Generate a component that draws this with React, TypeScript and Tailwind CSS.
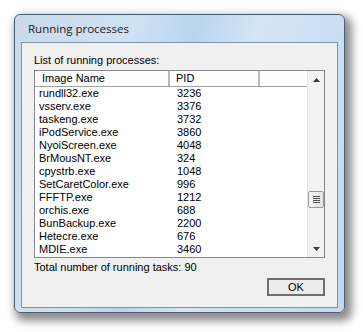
import React from "react";

const rows: [string, string][] = [
  ["rundll32.exe", "3236"],
  ["vsserv.exe", "3376"],
  ["taskeng.exe", "3732"],
  ["iPodService.exe", "3860"],
  ["NyoiScreen.exe", "4048"],
  ["BrMousNT.exe", "324"],
  ["cpystrb.exe", "1048"],
  ["SetCaretColor.exe", "996"],
  ["FFFTP.exe", "1212"],
  ["orchis.exe", "688"],
  ["BunBackup.exe", "2200"],
  ["Hetecre.exe", "676"],
  ["MDIE.exe", "3460"],
];

function ScrollArrow({ up }: { up?: boolean }) {
  return (
    <div className="h-[17px] flex items-center justify-center">
      <svg width="7" height="4" viewBox="0 0 7 4">
        {up ? <polygon points="3.5,0 7,4 0,4" fill="#3c3c3c" /> : <polygon points="0,0 7,0 3.5,4" fill="#3c3c3c" />}
      </svg>
    </div>
  );
}

export default function App() {
  return (
    <div className="w-[363px] h-[332px] bg-white pt-[14px] pl-[14px] font-['Liberation_Sans',Arial,sans-serif] text-[11px] text-black">
      <div className="w-[331px] h-[299px] rounded-[6px] border border-[#4e5c6c] shadow-[4px_5px_9px_3px_rgba(0,0,0,0.45)] bg-[linear-gradient(105deg,#c9daea_0%,#cfe2f4_30%,#b9d4ee_45%,#d3e5f6_60%,#c0d9f1_100%)] flex flex-col px-[6px] pb-[4px]">
        <div className="h-[27px] flex items-center pl-[7px] pt-[1px] text-[11.5px] text-[#1a1a1a] font-['Open_Sans',sans-serif]">
          Running processes
        </div>
        <div className="flex-1 border border-[#8193a8] bg-[#f0f0f0] flex flex-col px-[12px] pt-[11px]">
          <div className="h-[13px] leading-[13px]">List of running processes:</div>
          <div className="mt-[3px] h-[188px] border border-[#828790] bg-white flex">
            <div className="flex-1 flex flex-col">
              <div className="h-[16px] flex border-b border-[#a0a0a0] bg-[#fdfdfd] leading-[15px]">
                <div className="w-[135px] pl-[7px] border-r-2 border-r-[#b8b8b8]">Image Name</div>
                <div className="w-[90px] pl-[6px] border-r-2 border-r-[#b8b8b8]">PID</div>
                <div className="flex-1" />
              </div>
              {rows.map(([name, pid]) => (
                <div key={name} className="h-[13px] flex leading-[13px]">
                  <div className="w-[136px] pl-[4px]">{name}</div>
                  <div className="pl-[6px]">{pid}</div>
                </div>
              ))}
            </div>
            <div className="w-[17px] bg-[#f2f2f2] border-l border-[#e6e6e6] flex flex-col">
              <ScrollArrow up />
              <div className="flex-1 flex flex-col">
                <div className="h-[103px]" />
                <div className="h-[17px] rounded-[2px] border border-[#9a9a9a] bg-[linear-gradient(90deg,#f4f4f4,#e2e2e2)] flex flex-col items-center justify-center gap-[1px]">
                  <div className="w-[7px] h-px bg-[#555]" />
                  <div className="w-[7px] h-px bg-[#555]" />
                  <div className="w-[7px] h-px bg-[#555]" />
                  <div className="w-[7px] h-px bg-[#555]" />
                </div>
              </div>
              <ScrollArrow />
            </div>
          </div>
          <div className="mt-[3px] h-[13px] leading-[13px]">Total number of running tasks: 90</div>
          <div className="mt-[4px] flex justify-end">
            <button className="w-[58px] h-[18px] border-2 border-[#6e6e6e] bg-[#ececec] text-[11px] leading-[14px] flex items-center justify-center">
              OK
            </button>
          </div>
        </div>
      </div>
    </div>
  );
}
